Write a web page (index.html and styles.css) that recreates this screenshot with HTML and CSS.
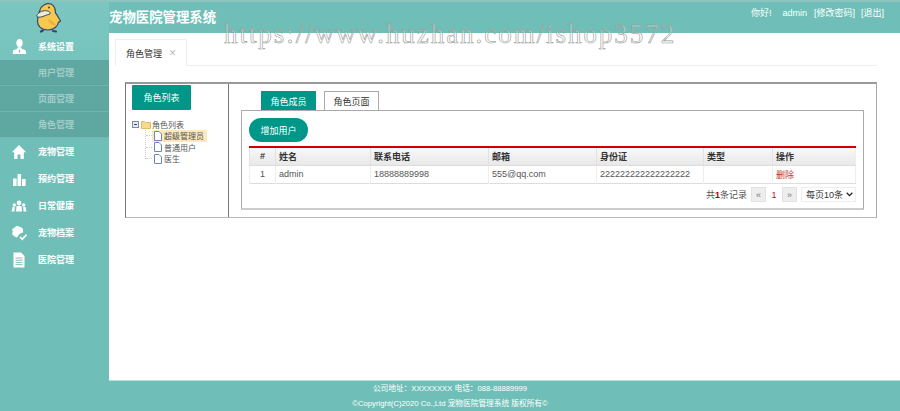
FILE: index.html
```html
<!DOCTYPE html>
<html lang="zh-CN">
<head>
  <meta charset="UTF-8">
  <title>宠物医院管理系统</title>
  <link rel="stylesheet" href="styles.css">
</head>
<body>

  <div class="watermark">https://www.huzhan.com/ishop3572</div>

  <aside class="sidebar">
    <div class="logo">
      <svg width="26" height="31" viewBox="0 0 26 31">
        <path d="M7 28.500l-2 1M17 29l3 .5" stroke="#34466b" stroke-width="2.200" stroke-linecap="round"/>
        <path d="M4 8c1-4 6-7.500 11-6 4 2 4.500 6 4.500 9 2 2 3 5 4.500 7 1 1 0 2-1.500 2-.5 4-4.500 8-10.500 8-7 0-10.500-4-10.500-9 0-4 1-7 2.500-11z" fill="#f6c94e" stroke="#34466b" stroke-width="1.200"/>
        <path d="M.8 14.500c-.5-1.500 2-4.500 6-5.500 4-1 7 .5 7.500 2 .3 1.500-2.500 1.500-5 2.500-3 1.500-7.500 2.500-8.500 1z" fill="#f1ead6" stroke="#34466b" stroke-width="1"/>
        <circle cx="13" cy="5.500" r="1" fill="#34466b"/>
        <path d="M12 17c1 4 4 7 8 6-2-3-5-5-8-6z" fill="#e8b23e"/>
      </svg>
    </div>

    <nav>
      <a class="nav-item" href="#">
        <svg class="nav-icon" width="16" height="16" viewBox="0 0 16 16"><ellipse cx="8.500" cy="4" rx="3.200" ry="4" fill="#fff"/><path d="M6.800 8.200h3.400l.4 1.500 4 1.600.7 3.700H1.500l.7-3.700 4-1.600z" fill="#fff"/><path d="M8.500 9.500l-.8 4h1.600z" fill="#6fbfb8"/></svg>
        系统设置
      </a>
      <a class="nav-sub" href="#">用户管理</a>
      <a class="nav-sub" href="#">页面管理</a>
      <a class="nav-sub" href="#">角色管理</a>
      <a class="nav-item" href="#">
        <svg class="nav-icon" width="16" height="16" viewBox="0 0 16 16"><path d="M8 1L.8 8.200h2.400V15h3.300v-4.500h3V15h3.300V8.200h2.400z" fill="#fff"/></svg>
        宠物管理
      </a>
      <a class="nav-item" href="#">
        <svg class="nav-icon" width="16" height="16" viewBox="0 0 16 16"><path d="M2 7.500h3.600V15H2zM6.500 3h3.600v12H6.500zM11 8h3.600v7H11z" fill="#fff"/></svg>
        预约管理
      </a>
      <a class="nav-item" href="#">
        <svg class="nav-icon" width="16" height="16" viewBox="0 0 16 16"><circle cx="8" cy="5" r="2.400" fill="#fff"/><circle cx="3.300" cy="7" r="1.700" fill="#fff"/><circle cx="12.700" cy="7" r="1.700" fill="#fff"/><path d="M5 13.500l.5-5.500h5l.5 5.500zM.5 13.500l1-4.500h2.300l-.3 4.500zM15.500 13.500l-1-4.500h-2.300l.3 4.500z" fill="#fff"/></svg>
        日常健康
      </a>
      <a class="nav-item" href="#">
        <svg class="nav-icon" width="16" height="16" viewBox="0 0 16 16"><path d="M6 .8l5 2 1 1.500v3.200L9 8.500 7 11 6 12.500 3.500 11.500 1 9l.8-2.500L1 4.500 3.500 2.500z" fill="#fff"/><path d="M9 12l2.200 2.200 4.300-4.400" stroke="#fff" stroke-width="1.700" fill="none"/></svg>
        宠物档案
      </a>
      <a class="nav-item" href="#">
        <svg class="nav-icon" width="16" height="16" viewBox="0 0 16 16"><path d="M2.500.500H10L13.500 4v11.500h-11z" fill="#fff"/><path d="M4.500 6h7M4.500 8.200h7M4.500 10.400h7M4.500 12.600h7" stroke="#6fbfb8" stroke-width=".9"/></svg>
        医院管理
      </a>
    </nav>
  </aside>

  <div class="right">
    <header class="topbar">
      <div class="sys-title">宠物医院管理系统</div>
      <div class="user-links">你好!<span class="user-name">admin</span>[修改密码]<span class="logout">[退出]</span></div>
    </header>

    <main class="content">
      <div class="page-tabs">
        <div class="page-tab">角色管理<span class="tab-close">×</span></div>
      </div>

      <div class="panel">
        <div class="role-side">
          <button class="green-btn">角色列表</button>
          <div class="tree">
            <div class="tree-row">
              <svg width="7" height="7" viewBox="0 0 7 7"><rect x=".5" y=".5" width="6" height="6" fill="#e6ebf3" stroke="#7b8ba5"/><path d="M2 3.500h3" stroke="#445"/></svg>
              <svg width="10" height="9" viewBox="0 0 10 9"><path d="M.5 1.500h3l1 1h5v6H.5z" fill="#f6dc8a" stroke="#dcbc68"/></svg>
              <span>角色列表</span>
            </div>
            <div class="tree-kids">
              <div class="tree-leaf">
                <div class="leaf-body selected">
                  <svg width="8" height="10" viewBox="0 0 8 10"><path d="M.5.500h4.500l2.500 2.500v6.500H.5z" fill="#fff" stroke="#6f86b8"/></svg>
                  <span>超级管理员</span>
                </div>
              </div>
              <div class="tree-leaf">
                <div class="leaf-body">
                  <svg width="8" height="10" viewBox="0 0 8 10"><path d="M.5.500h4.500l2.500 2.500v6.500H.5z" fill="#fff" stroke="#6f86b8"/></svg>
                  <span>普通用户</span>
                </div>
              </div>
              <div class="tree-leaf">
                <div class="leaf-body">
                  <svg width="8" height="10" viewBox="0 0 8 10"><path d="M.5.500h4.500l2.500 2.500v6.500H.5z" fill="#fff" stroke="#6f86b8"/></svg>
                  <span>医生</span>
                </div>
              </div>
            </div>
          </div>
        </div>

        <div class="role-main">
          <div class="sub-tabs">
            <div class="sub-tab on">角色成员</div>
            <div class="sub-tab">角色页面</div>
          </div>
          <div class="sub-box">
            <button class="add-btn">增加用户</button>
            <table class="grid">
              <thead>
                <tr>
                  <th class="c-no">#</th>
                  <th class="c-name">姓名</th>
                  <th class="c-tel">联系电话</th>
                  <th class="c-mail">邮箱</th>
                  <th class="c-id">身份证</th>
                  <th class="c-type">类型</th>
                  <th>操作</th>
                </tr>
              </thead>
              <tbody>
                <tr>
                  <td class="c-no">1</td>
                  <td>admin</td>
                  <td>18888889998</td>
                  <td>555@qq.com</td>
                  <td>222222222222222222</td>
                  <td></td>
                  <td><a class="del" href="#">删除</a></td>
                </tr>
              </tbody>
            </table>
            <div class="pager">
              <span class="total">共<b>1</b>条记录</span>
              <span class="page-btn">«</span>
              <span class="page-num">1</span>
              <span class="page-btn">»</span>
              <span class="page-size">每页10条<svg width="7" height="5" viewBox="0 0 7 5"><path d="M.7.800l2.800 2.800L6.300.800" stroke="#222" stroke-width="1.300" fill="none"/></svg></span>
            </div>
          </div>
        </div>
      </div>
    </main>

    <footer class="footer">
      <div>公司地址：XXXXXXXX 电话：088-88889999</div>
      <div>©Copyright(C)2020 Co.,Ltd 宠物医院管理系统 版权所有©</div>
    </footer>
  </div>

</body>
</html>
```

FILE: styles.css
```css
* {
  box-sizing: border-box;
}

html, body {
  height: 411px;
  overflow: hidden;
}

body {
  margin: 0;
  display: flex;
  position: relative;
  background-color: #fff;
  color: #444;
  font-family: "Liberation Sans", "Noto Sans CJK SC", sans-serif;
  font-size: 9px;
}

a {
  text-decoration: none;
}

.watermark {
  position: absolute;
  top: 17px;
  left: 224px;
  z-index: 5;
  font-family: "Liberation Serif", serif;
  font-size: 27px;
  letter-spacing: 1.950px;
  line-height: 34px;
  white-space: nowrap;
  color: rgba(255, 255, 255, 0.3);
  -webkit-text-stroke: 0.6px #999;
}

/* left menu */
.sidebar {
  width: 109px;
  flex: none;
  background: linear-gradient(#7cc6c0, #6fbfb8 140px);
  border-top: 2px solid #8cc4bf;
}

.logo {
  height: 31px;
  padding-left: 36px;
}

.nav-item {
  height: 27px;
  display: flex;
  align-items: center;
  gap: 4px;
  padding-left: 11px;
  color: #fff;
  font-weight: bold;
}

.nav-icon {
  margin-right: 7px;
}

.nav-sub {
  display: block;
  height: 26px;
  line-height: 27px;
  padding-left: 38px;
  background-color: #5fa8a2;
  border-bottom: 1px solid #71b3ae;
  color: #a3cdc9;
  font-weight: bold;
}

/* right side */
.right {
  flex: 1;
  display: flex;
  flex-direction: column;
  min-width: 0;
}

.topbar {
  height: 33px;
  flex: none;
  display: flex;
  justify-content: space-between;
  background-color: #6fbfb8;
  border-top: 2px solid #8cc4bf;
  color: #fff;
}

.sys-title {
  font-size: 13.400px;
  font-weight: bold;
  line-height: 31px;
}

.user-links {
  padding: 5px 16px 0 0;
  line-height: 13px;
}

.user-name {
  margin: 0 7px 0 11px;
}

.logout {
  margin-left: 6px;
}

.content {
  flex: 1;
  padding: 6px 23px 0 6px;
}

.page-tabs {
  height: 27px;
  padding-right: 24px;
  border-bottom: 1px solid #eee;
}

.page-tab {
  width: 72px;
  height: 27px;
  padding-left: 10px;
  line-height: 26px;
  background-color: #fff;
  border: 1px solid #eee;
  border-bottom: none;
  color: #333;
}

.tab-close {
  margin-left: 7px;
  color: #bbb;
  font-size: 12px;
  font-weight: normal;
}

.panel {
  display: flex;
  height: 136px;
  margin: 16px 0 0 10px;
  border: 1px solid #777;
  border-top-width: 2px;
  border-top-color: #999;
  border-bottom-color: #bbb;
  border-right-color: #aaa;
}

.role-side {
  width: 103px;
  flex: none;
  padding: 1px 0 0 6px;
  border-right: 1px solid #777;
}

.green-btn {
  width: 59px;
  height: 25px;
  border: none;
  border-radius: 1px;
  background-color: #009688;
  color: #fff;
  font: inherit;
}

.tree {
  margin-top: 8px;
  color: #555;
  font-size: 8px;
}

.tree-row {
  display: flex;
  align-items: center;
  gap: 2px;
  height: 12px;
}

.tree-row svg + svg {
  margin-left: 0;
}

.tree-row span {
  margin-left: -1px;
}

.tree-kids {
  margin-left: 13px;
  border-left: 1px dotted #ccc;
  height: 29px;
}

.tree-leaf {
  display: flex;
  align-items: center;
  height: 11.500px;
}

.tree-leaf::before {
  content: "";
  width: 6px;
  border-top: 1px dotted #ccc;
}

.leaf-body {
  display: flex;
  align-items: center;
  gap: 2px;
  width: 55px;
  height: 12px;
  padding-left: 2px;
  white-space: nowrap;
}

.leaf-body.selected {
  background-color: #fbe8bd;
  border-radius: 1px;
}

.role-main {
  flex: 1;
  padding: 7px 12px 0 12px;
}

.sub-tabs {
  display: flex;
  gap: 8px;
  padding-left: 20px;
}

.sub-tab {
  width: 55px;
  height: 19px;
  line-height: 20px;
  text-align: center;
  border: 1px solid #aaa;
  border-bottom: none;
  border-radius: 1px 1px 0 0;
  color: #333;
}

.sub-tab.on {
  background-color: #009688;
  border-color: #009688;
  color: #fff;
}

.sub-box {
  height: 100px;
  padding: 7px 7px 0 7px;
  border: 1px solid #aaa;
  border-bottom: 2px solid #ccc;
  border-radius: 1px;
}

.add-btn {
  display: block;
  width: 59px;
  height: 24px;
  border: none;
  border-radius: 12px;
  background-color: #009688;
  color: #fff;
  font: inherit;
}

.grid {
  width: 607px;
  margin-top: 4px;
  table-layout: fixed;
  border-collapse: collapse;
  border-top: 2px solid #c00;
  border-bottom: 1px solid #ddd;
  border-right: 1px solid #eee;
  border-left: 1px solid #eee;
}

.grid th {
  height: 18px;
  padding: 0 0 0 3px;
  text-align: left;
  color: #333;
  background: linear-gradient(#f8f8f8, #e8e8e8);
  border-left: 1px solid #e2e2e2;
  border-bottom: 1px solid #ddd;
}

.grid td {
  height: 18px;
  padding: 0 0 0 3px;
  border-left: 1px solid #eee;
  color: #555;
}

.grid .c-no {
  padding: 0;
  text-align: center;
}

.c-no { width: 26px; }
.c-name { width: 95px; }
.c-tel { width: 118px; }
.c-mail { width: 108px; }
.c-id { width: 107px; }
.c-type { width: 69px; }

.del {
  color: #c0392b;
}

.pager {
  display: flex;
  justify-content: flex-end;
  align-items: center;
  height: 16px;
  margin-top: 3px;
  color: #555;
}

.pager b {
  color: #a00;
}

.total {
  margin-right: 4px;
}

.page-btn {
  width: 15px;
  height: 15px;
  line-height: 14px;
  text-align: center;
  background-color: #eee;
  border: 1px solid #e2e2e2;
  color: #777;
  font-size: 9px;
}

.page-num {
  width: 16px;
  text-align: center;
  color: #a8212b;
}

.page-size {
  display: flex;
  align-items: center;
  justify-content: space-between;
  width: 55px;
  height: 15px;
  margin-left: 4px;
  padding: 0 2px 0 4px;
  border: 1px solid #eee;
  color: #333;
}

.footer {
  height: 31px;
  flex: none;
  padding-right: 109px;
  background-color: #6fbfb8;
  border-top: 1px solid #bfe0dd;
  text-align: center;
  color: #fff;
  font-size: 7.700px;
  line-height: 15px;
}
```
